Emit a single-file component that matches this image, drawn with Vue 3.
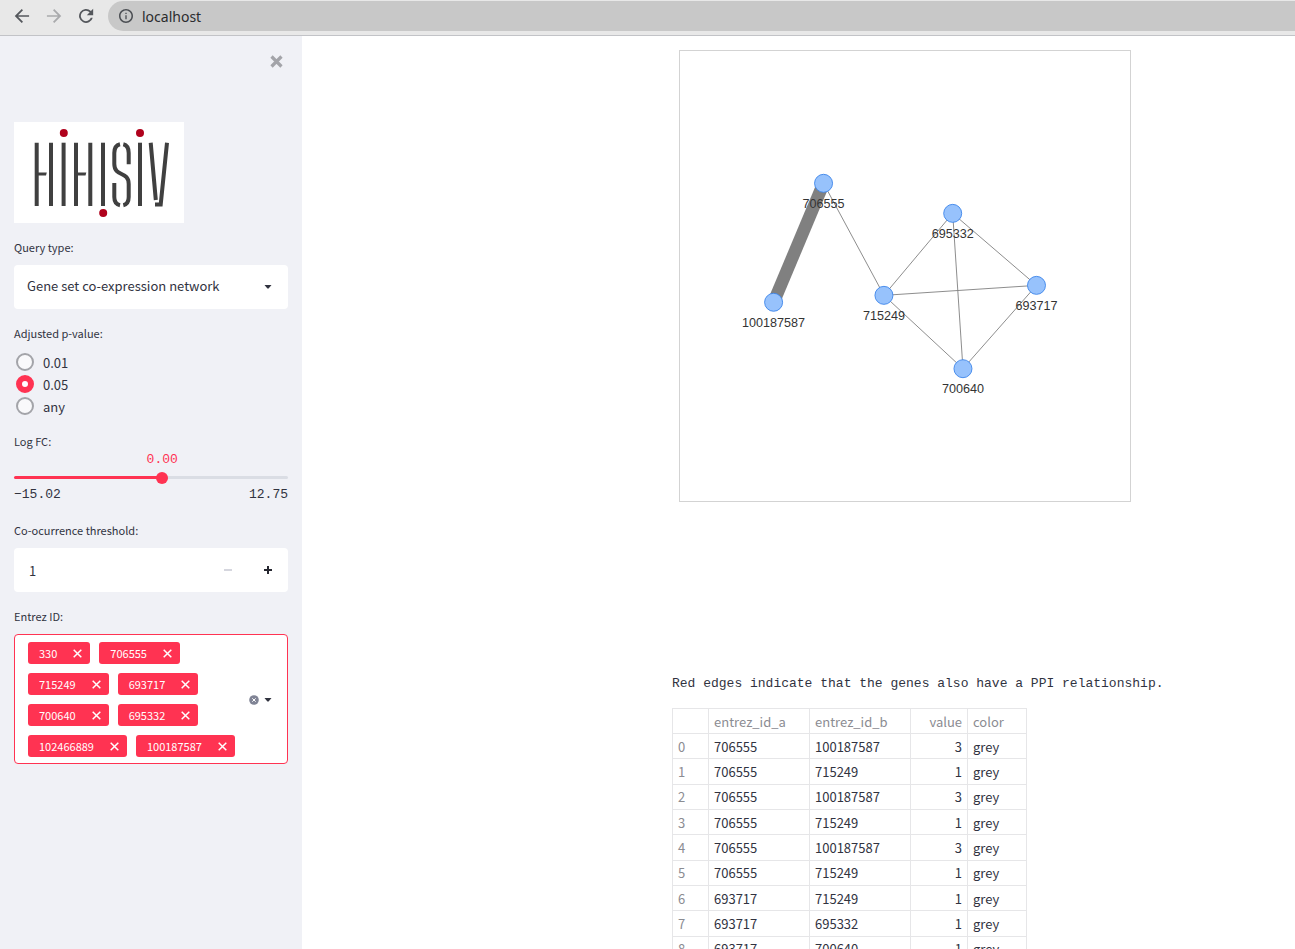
<script setup>
import { computed, ref } from 'vue'

const queryType = ref('Gene set co-expression network')
const pValues = ['0.01', '0.05', 'any']
const pValue = ref('0.05')

const fcMin = -15.02
const fcMax = 12.75
const logFc = ref(0)
const fcPercent = computed(() => ((logFc.value - fcMin) / (fcMax - fcMin)) * 100 + '%')

const threshold = ref(1)

const entrezIds = ref(['330', '706555', '715249', '693717', '700640', '695332', '102466889', '100187587'])
const removeId = (id) => {
  entrezIds.value = entrezIds.value.filter((e) => e !== id)
}

const nodes = {
  706555: { x: 159.5, y: 147 },
  100187587: { x: 104, y: 279.2 },
  715249: { x: 226.6, y: 271.5 },
  695332: { x: 303, y: 180.4 },
  693717: { x: 396.1, y: 260.4 },
  700640: { x: 314.4, y: 353 },
}
const edges = [
  ['706555', '100187587', 14],
  ['706555', '715249', 1],
  ['715249', '695332', 1],
  ['715249', '693717', 1],
  ['715249', '700640', 1],
  ['695332', '693717', 1],
  ['695332', '700640', 1],
  ['693717', '700640', 1],
]

const rows = [
  ['706555', '100187587', 3],
  ['706555', '715249', 1],
  ['706555', '100187587', 3],
  ['706555', '715249', 1],
  ['706555', '100187587', 3],
  ['706555', '715249', 1],
  ['693717', '715249', 1],
  ['693717', '695332', 1],
  ['693717', '700640', 1],
]
</script>

<template>
  <div class="window">
    <header class="toolbar">
      <button class="nav" aria-label="Back">
        <svg viewBox="0 0 24 24"><path d="M20.5 11H7.3l5.9-5.9L11.7 3.6 3.3 12l8.4 8.4 1.5-1.5L7.3 13h13.2z" /></svg>
      </button>
      <button class="nav" aria-label="Forward" disabled>
        <svg viewBox="0 0 24 24"><path d="M3.5 11h13.2l-5.9-5.9 1.5-1.5 8.4 8.4-8.4 8.4-1.5-1.5 5.9-5.9H3.5z" /></svg>
      </button>
      <button class="nav" aria-label="Reload">
        <svg viewBox="0 0 24 24"><path d="M17.9 6.1A8.35 8.35 0 1 0 20.1 14.1h-2.3A6.2 6.2 0 1 1 16.4 7.6L13 11h7.6V3.4z" /></svg>
      </button>
      <div class="address">
        <button class="info" aria-label="Site information">
          <svg viewBox="0 0 24 24"><path d="M11 7h2v2h-2zm0 4h2v6h-2zm1-9.5C6.2 1.5 1.5 6.2 1.5 12S6.2 22.500 12 22.500 22.500 17.800 22.500 12 17.800 1.500 12 1.500zm0 18.700c-4.530 0-8.200-3.670-8.200-8.200S7.470 3.800 12 3.800s8.200 3.670 8.200 8.200-3.670 8.200-8.200 8.200z" /></svg>
        </button>
        <input type="text" value="localhost" aria-label="Address" />
      </div>
    </header>

    <div class="page">
      <aside class="sidebar">
        <button class="close" aria-label="Close sidebar">
          <svg viewBox="0 0 12 12"><path d="M1.4 1.4l9.2 9.2M10.6 1.4l-9.2 9.2" /></svg>
        </button>

        <svg class="logo" viewBox="0 0 170 101" role="img" aria-label="HIHISIV">
          <g class="strokes">
            <path d="M22.7 20.7V84M37 20.7V84" />
            <path d="M49.6 20.7V84" />
            <path d="M62 20.7V84M76.3 20.7V84" />
            <path d="M89 20.7V84" />
            <path d="M106 22.2Q100.3 23.5 100.3 31V42C100.3 55 114.7 49 114.7 62V75Q114.7 82 109.3 83.2" />
            <path d="M109.3 22.2Q114.7 23.5 114.7 31V42.3M100.3 61V75Q100.3 82 106 83.2" />
            <path d="M126 20.7V84" />
            <path d="M136.7 20.7L141.8 78M153 20.7L146.7 82.5H141" />
          </g>
          <path class="bars" d="M22 50.6H32.800L32 53.400H22zM61 50.600H72.300L71.500 53.400H61z" />
          <g class="dots">
            <circle cx="49.8" cy="11" r="4" />
            <circle cx="126" cy="11" r="4" />
            <circle cx="89.2" cy="91" r="4" />
          </g>
        </svg>

        <div class="field">
          <label class="title" for="query">Query type:</label>
          <div class="box">
            <select id="query" v-model="queryType">
              <option>Gene set co-expression network</option>
            </select>
            <svg class="caret" viewBox="0 0 8 4"><path d="M0.5 0h7L4.6 3.6h-1.2z" /></svg>
          </div>
        </div>

        <div class="field" role="radiogroup" aria-labelledby="pvalue-title">
          <span id="pvalue-title" class="title">Adjusted p-value:</span>
          <label v-for="p in pValues" :key="p" class="option">
            <input v-model="pValue" type="radio" name="pvalue" :value="p" />
            <span>{{ p }}</span>
          </label>
        </div>

        <div class="field slider">
          <label class="title" for="logfc">Log FC:</label>
          <output for="logfc" :style="{ '--at': fcPercent }">{{ logFc.toFixed(2) }}</output>
          <input
            id="logfc"
            v-model.number="logFc"
            type="range"
            :min="fcMin"
            :max="fcMax"
            step="0.01"
            :style="{ '--at': fcPercent }"
          />
          <div class="bounds">
            <span>−15.02</span>
            <span>12.75</span>
          </div>
        </div>

        <div class="field">
          <label class="title" for="threshold">Co-ocurrence threshold:</label>
          <div class="box">
            <input id="threshold" v-model.number="threshold" type="number" min="1" />
            <button class="step" aria-label="Decrease" :disabled="threshold <= 1" @click="threshold--">
              <svg viewBox="0 0 8 8"><path d="M0 4h8" /></svg>
            </button>
            <button class="step" aria-label="Increase" @click="threshold++">
              <svg viewBox="0 0 8 8"><path d="M0 4h8M4 0v8" /></svg>
            </button>
          </div>
        </div>

        <div class="field" role="group" aria-labelledby="entrez-title">
          <span id="entrez-title" class="title">Entrez ID:</span>
          <div class="multi">
            <div class="tags">
              <span v-for="id in entrezIds" :key="id" class="tag">
                {{ id }}
                <button :aria-label="'Remove ' + id" @click="removeId(id)">
                  <svg viewBox="0 0 9 9"><path d="M0.7 0.7l7.6 7.6M8.3 0.7L0.7 8.3" /></svg>
                </button>
              </span>
            </div>
            <button class="clear" aria-label="Clear all" @click="entrezIds = []">
              <svg viewBox="0 0 10 10"><circle cx="5" cy="5" r="4.8" /><path d="M3.3 3.3l3.4 3.4M6.7 3.3L3.3 6.7" /></svg>
            </button>
            <svg class="caret" viewBox="0 0 8 4"><path d="M0.5 0h7L4.6 3.6h-1.2z" /></svg>
          </div>
        </div>
      </aside>

      <main class="content">
        <div class="network">
          <svg viewBox="0 0 500 500" role="img" aria-label="Co-expression network">
            <line
              v-for="[a, b, w] in edges"
              :key="a + b"
              :x1="nodes[a].x"
              :y1="nodes[a].y"
              :x2="nodes[b].x"
              :y2="nodes[b].y"
              :stroke-width="w"
            />
            <g v-for="(n, id) in nodes" :key="id">
              <circle :cx="n.x" :cy="n.y" r="10" />
              <text :x="n.x" :y="n.y + 27">{{ id }}</text>
            </g>
          </svg>
        </div>

        <p class="note">Red edges indicate that the genes also have a PPI relationship.</p>

        <table>
          <colgroup>
            <col class="c-index" />
            <col class="c-id" />
            <col class="c-id" />
            <col class="c-value" />
            <col class="c-color" />
          </colgroup>
          <thead>
            <tr>
              <th></th>
              <th>entrez_id_a</th>
              <th>entrez_id_b</th>
              <th class="num">value</th>
              <th>color</th>
            </tr>
          </thead>
          <tbody>
            <tr v-for="([a, b, v], i) in rows" :key="i">
              <th>{{ i }}</th>
              <td>{{ a }}</td>
              <td>{{ b }}</td>
              <td class="num">{{ v }}</td>
              <td>grey</td>
            </tr>
          </tbody>
        </table>
      </main>
    </div>
  </div>
</template>

<style>
body {
  margin: 0;
  background: #fff;
}
</style>

<style scoped>
.window {
  display: flex;
  flex-direction: column;
  height: 100vh;
  overflow: hidden;
  font-family: "Noto Sans CJK SC", "Open Sans", sans-serif;
  font-size: 13px;
  color: #31333f;
}

.window * {
  box-sizing: border-box;
}

button {
  display: flex;
  align-items: center;
  justify-content: center;
  padding: 0;
  border: 0;
  background: none;
  color: inherit;
}

input,
select {
  margin: 0;
  border: 0;
  padding: 0;
  font: inherit;
  color: inherit;
  background: none;
  outline: none;
}

/* Browser toolbar */
.toolbar {
  display: flex;
  flex: none;
  gap: 12px;
  height: 36px;
  padding: 1px 0 4px 12px;
  background: #e8e8e8;
  border-bottom: 1px solid #c2c3c7;
}

.nav {
  width: 20px;
  color: #54575c;
}

.nav:disabled {
  color: #a9aaac;
}

.nav svg {
  width: 20px;
  height: 20px;
  fill: currentColor;
}

.address {
  display: flex;
  flex: 1;
  align-items: center;
  gap: 8px;
  padding-left: 10px;
  background: #c8c8c8;
  border-radius: 15px 0 0 15px;
}

.info svg {
  width: 16px;
  height: 16px;
  fill: #4c4f54;
}

.address input {
  flex: 1;
  font-family: "Noto Sans", sans-serif;
  font-size: 14px;
  color: #2b2c2e;
}

/* Sidebar */
.page {
  display: flex;
  flex: 1;
  min-height: 0;
}

.sidebar {
  display: flex;
  flex: none;
  flex-direction: column;
  gap: 15px;
  width: 302px;
  padding: 19px 14px 0;
  background: #f0f1f6;
}

.close {
  align-self: flex-end;
  width: 24px;
  height: 13px;
}

.close svg {
  width: 13px;
  height: 13px;
  fill: none;
  stroke: #a3a4a9;
  stroke-width: 3;
}

.logo {
  width: 170px;
  height: 101px;
  margin-top: 39px;
  background: #fff;
}

.strokes {
  fill: none;
  stroke: #404040;
  stroke-width: 4;
}

.bars {
  fill: #404040;
}

.dots {
  fill: #b0021d;
}

.field {
  display: flex;
  flex-direction: column;
}

.title {
  height: 18px;
  margin-bottom: 9px;
  font-size: 11px;
  line-height: 18px;
}

.box {
  display: flex;
  align-items: center;
  height: 44px;
  background: #fff;
  border-radius: 4px;
}

.box select {
  flex: 1;
  height: 44px;
  padding: 0 0 3px 13px;
  appearance: none;
}

.caret {
  flex: none;
  width: 8px;
  height: 4px;
  margin-right: 16px;
  fill: #31333f;
}

.option {
  display: flex;
  align-items: center;
  gap: 9px;
  height: 22px;
  padding-left: 2px;
}

.option input {
  width: 18px;
  height: 18px;
  appearance: none;
  background: #f9f9fb;
  border: 2px solid #a3a4a9;
  border-radius: 50%;
}

.option input:checked {
  background: #fff;
  border: 6px solid #ff3352;
}

.slider .title {
  margin-bottom: 0;
}

.slider output {
  display: flex;
  justify-content: center;
  width: calc(var(--at) * 2);
  height: 20px;
  line-height: 20px;
  color: #ff3352;
}

.slider output,
.bounds,
.note {
  font-family: "Liberation Mono", monospace;
  font-size: 13px;
}

.slider input {
  height: 14px;
  appearance: none;
}

.slider input::-webkit-slider-runnable-track {
  height: 3px;
  background: linear-gradient(to right, #ff3352 var(--at), #dadde4 var(--at));
  border-radius: 2px;
}

.slider input::-webkit-slider-thumb {
  width: 12px;
  height: 12px;
  margin-top: -4px;
  appearance: none;
  background: #ff3352;
  border-radius: 50%;
}

.bounds {
  display: flex;
  justify-content: space-between;
  height: 22px;
  line-height: 22px;
}

.box input {
  flex: 1;
  min-width: 0;
  height: 44px;
  padding-left: 15px;
  appearance: textfield;
}

.box input::-webkit-inner-spin-button {
  appearance: none;
}

.step {
  width: 40px;
  height: 44px;
}

.step svg {
  width: 8px;
  height: 8px;
  stroke: #262730;
  stroke-width: 2;
}

.step:disabled svg {
  stroke: #d5d6de;
}

.multi {
  display: flex;
  align-items: center;
  padding: 7px 0 6px 13px;
  background: #fff;
  border: 1px solid #ff3352;
  border-radius: 4px;
}

.multi .caret {
  margin-right: 15px;
}

.tags {
  display: flex;
  flex: 1;
  flex-wrap: wrap;
  gap: 9px;
}

.tag {
  display: flex;
  align-items: center;
  gap: 16px;
  height: 22px;
  padding: 0 8px 0 11px;
  background: #ff3352;
  border-radius: 3px;
  font-size: 11px;
  color: #fff;
}

.tag svg {
  width: 9px;
  height: 9px;
  stroke: #fff;
  stroke-width: 1.5;
}

.clear {
  margin-right: 5px;
}

.clear svg {
  width: 10px;
  height: 10px;
  fill: #808495;
  stroke: #fff;
  stroke-width: 1;
}

.clear circle {
  stroke: none;
}

/* Main content */
.content {
  flex: 1;
  min-width: 0;
  padding: 14px 0 0 370px;
  overflow: hidden;
}

.network {
  width: 452px;
  margin: 0 7px 173px;
  border: 1px solid #d3d3d3;
}

.network svg {
  display: block;
  width: 100%;
}

.network line {
  stroke: #808080;
}

.network circle {
  fill: #97c2fc;
  stroke: #3c85ea;
}

.network text {
  font-family: "Liberation Sans", Arial, sans-serif;
  font-size: 14px;
  fill: #343434;
  text-anchor: middle;
}

.note {
  margin: 0 0 15px;
  line-height: 18px;
}

table {
  width: 355px;
  height: 254px;
  table-layout: fixed;
  border-collapse: collapse;
}

.c-index {
  width: 36px;
}

.c-id {
  width: 101px;
}

.c-value {
  width: 57px;
}

.c-color {
  width: 59px;
}

th,
td {
  height: 25px;
  padding: 0 5px;
  border: 1px solid #e6e6e8;
  line-height: 19px;
  text-align: left;
}

th {
  font-weight: 400;
  color: #8b8c92;
}

.num {
  text-align: right;
}
</style>
